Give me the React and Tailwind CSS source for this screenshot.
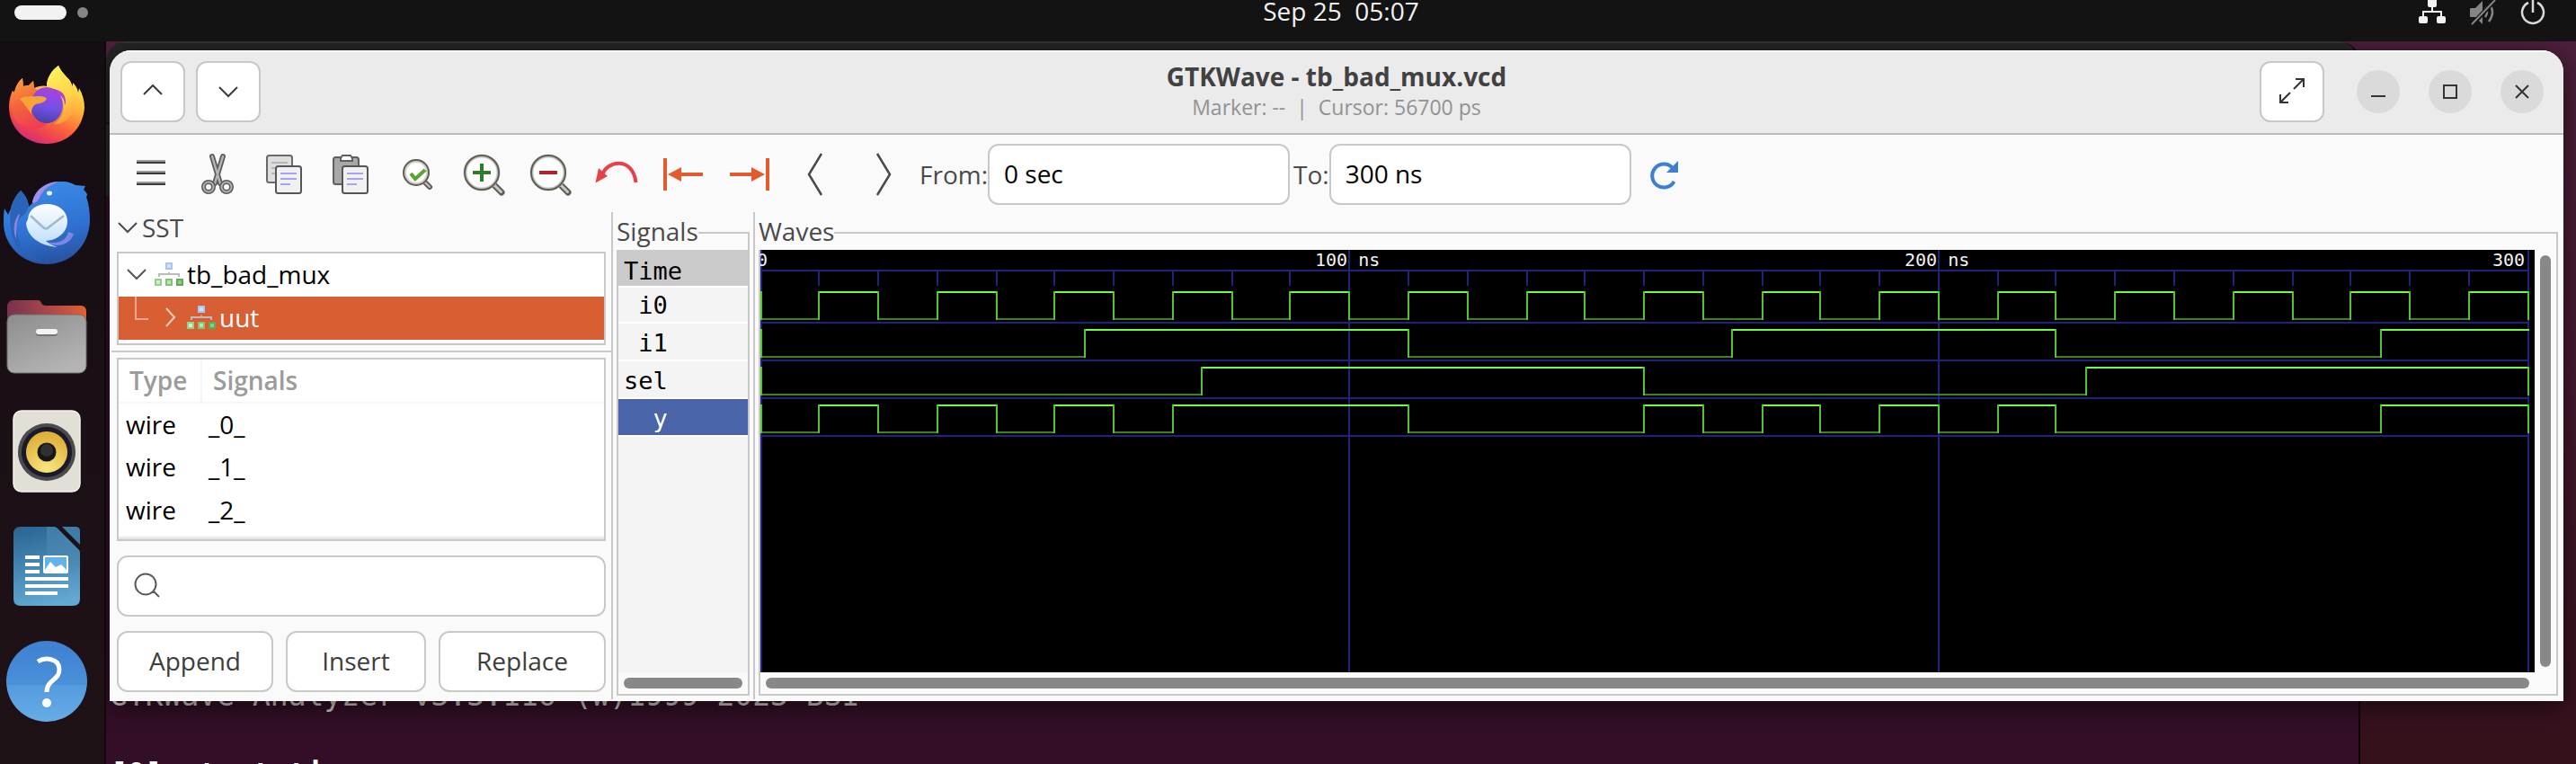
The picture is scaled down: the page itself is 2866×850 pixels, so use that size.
import React from "react";

/* ---------- dock icons ---------- */

function FirefoxIcon() {
  return (
    <svg viewBox="0 0 96 96" className="size-24" aria-hidden="true">
      <defs>
        <linearGradient id="ff-body" x1="0.75" y1="0.1" x2="0.3" y2="1">
          <stop offset="0" stopColor="#fff058" />
          <stop offset="0.35" stopColor="#ffb338" />
          <stop offset="0.62" stopColor="#fa6a3c" />
          <stop offset="0.82" stopColor="#ef4250" />
          <stop offset="1" stopColor="#cf2b7d" />
        </linearGradient>
        <linearGradient id="ff-left" x1="0.2" y1="0" x2="0.5" y2="1">
          <stop offset="0" stopColor="#f7a035" />
          <stop offset="0.5" stopColor="#f4643c" />
          <stop offset="1" stopColor="#ee3f52" />
        </linearGradient>
        <linearGradient id="ff-globe" x1="0.6" y1="0" x2="0.4" y2="1">
          <stop offset="0" stopColor="#ac3fe0" />
          <stop offset="0.55" stopColor="#7450e6" />
          <stop offset="1" stopColor="#4a3fa8" />
        </linearGradient>
        <linearGradient id="ff-flame" x1="0.3" y1="0" x2="0.6" y2="1">
          <stop offset="0" stopColor="#fff45c" />
          <stop offset="0.6" stopColor="#ffd24a" />
          <stop offset="1" stopColor="#ff9a3a" />
        </linearGradient>
      </defs>
      <path d="M61 3C64 10 70 15 74 20C75 23 76 25 77 27L77 22C80 25 82 28 83 33L84 28C88 35 90 42 90 50C88 74 70 90 48 90C24 90 6 72 6 49C6 43 7 37 10 31L12 33C13 27 16 21 21 17L22 26C24 25 26 25 28 25L33 20L34 28C38 26 43 25 48 26C48 16 54 8 61 3Z" fill="url(#ff-body)" />
      <path d="M10 31L12 33C13 27 16 21 21 17L22 26L28 25L33 20L34 28C38 30 41 33 45 38C38 42 32 44 30 50C32 60 40 66 50 65C44 76 24 78 12 62C7 52 6 41 10 31Z" fill="url(#ff-left)" />
      <path d="M61 3C64 10 70 15 74 20C80 30 82 44 77 55C72 65 64 68 56 68C66 62 69 52 66 43C63 36 58 31 48 26C48 16 54 8 61 3Z" fill="url(#ff-flame)" />
      <ellipse cx="48" cy="47" rx="18" ry="20" fill="url(#ff-globe)" />
      <path d="M18 40C24 36 30 38 38 37C42 37 46 37 48 40C46 44 40 45 36 46C32 48 31 52 31 57C26 50 22 44 18 40Z" fill="#f5a437" />
      <path d="M56 35C62 34 68 38 68 47C70 44 69 38 66 34C63 31 59 29 54 29C58 31 61 32 62 35Z" fill="#b33fd6" />
    </svg>
  );
}

function ThunderbirdIcon() {
  return (
    <svg viewBox="0 0 96 96" className="size-24" aria-hidden="true">
      <defs>
        <linearGradient id="tb-body" x1="0.4" y1="0" x2="0.6" y2="1">
          <stop offset="0" stopColor="#3a8ce6" />
          <stop offset="0.6" stopColor="#2f70d0" />
          <stop offset="1" stopColor="#27529f" />
        </linearGradient>
        <linearGradient id="tb-mail" x1="0" y1="0" x2="0" y2="1">
          <stop offset="0" stopColor="#ffffff" />
          <stop offset="1" stopColor="#b9dcfa" />
        </linearGradient>
      </defs>
      <path d="M1 34L5 41L8 34C10 26 14 19 19 14C24 19 27 24 28 32L32 28C33 15 46 3 66 4C72 4 76 6 80 8L91 9L89 13C93 17 94 19 92 21C95 29 96 38 96 48C95 76 74 96 48 96C20 96 0 74 0 50C0 44 0 39 1 34Z" fill="url(#tb-body)" />
      <path d="M32 28C34 15 46 4 62 4C50 8 43 14 40 22C38 26 35 28 32 28Z" fill="#a98be8" />
      <path d="M8 34C10 26 14 19 19 14C24 19 27 24 28 32L24 40C16 44 12 54 16 66C18 78 28 88 40 92C18 88 4 70 8 34Z" fill="#2a63b8" />
      <path d="M17 40C11 48 10 58 14 68C14 56 15 48 18 41Z" fill="#8a84e0" />
      <path d="M72 60C70 70 60 74 46 71C56 78 74 76 78 62Z" fill="#7c86e4" />
      <path d="M27 46C28 34 38 29 48 29C60 29 71 36 71 48C71 61 60 69 47 70C51 74 55 75 60 77C42 76 26 66 25 50Z" fill="url(#tb-mail)" />
      <path d="M30 42L44 55C46 57 48 57 50 55L67 42" fill="none" stroke="#9fb9cf" strokeWidth="2.5" />
      <ellipse cx="51" cy="17" rx="3" ry="2.4" fill="#e8f4ff" />
    </svg>
  );
}

function FilesIcon() {
  return (
    <svg viewBox="0 0 96 96" className="size-24" aria-hidden="true">
      <defs>
        <linearGradient id="fl-back" x1="0" y1="0" x2="1" y2="0">
          <stop offset="0" stopColor="#77324f" />
          <stop offset="0.5" stopColor="#a8464a" />
          <stop offset="1" stopColor="#e2602f" />
        </linearGradient>
        <linearGradient id="fl-front" x1="0" y1="0" x2="0.6" y2="1">
          <stop offset="0" stopColor="#8c8c8c" />
          <stop offset="1" stopColor="#b4b4b4" />
        </linearGradient>
      </defs>
      <path d="M4 16Q4 8 11 8H38Q41 8 42 11Q43 14 47 14H86Q92 14 92 21V40H4Z" fill="url(#fl-back)" />
      <rect x="4" y="24" width="88" height="65" rx="8" fill="url(#fl-front)" stroke="#6f6f6f" strokeWidth="1" />
      <rect x="36" y="42" width="24" height="6" rx="3" fill="#747474" />
      <rect x="36" y="40" width="24" height="6" rx="3" fill="#f3f3f3" />
    </svg>
  );
}

function RhythmboxIcon() {
  return (
    <svg viewBox="0 0 96 96" className="size-24" aria-hidden="true">
      <defs>
        <radialGradient id="rb-cone" cx="0.5" cy="0.9" r="0.8">
          <stop offset="0" stopColor="#f9e680" />
          <stop offset="1" stopColor="#e0b13a" />
        </radialGradient>
      </defs>
      <rect x="11" y="3" width="74" height="90" rx="9" fill="#e2dfd7" stroke="#f6f4ee" strokeWidth="1.5" />
      <circle cx="48" cy="49" r="32" fill="#4b4a4d" />
      <circle cx="48" cy="49" r="28" fill="#1b1a2a" />
      <circle cx="48" cy="49" r="23" fill="url(#rb-cone)" />
      <circle cx="48" cy="49" r="10.5" fill="#161616" />
      <circle cx="48" cy="47" r="7" fill="#303030" />
    </svg>
  );
}

function WriterIcon() {
  return (
    <svg viewBox="0 0 96 96" className="size-24" aria-hidden="true">
      <defs>
        <linearGradient id="wr-body" x1="0.3" y1="0" x2="0.5" y2="1">
          <stop offset="0" stopColor="#2c6796" />
          <stop offset="1" stopColor="#62a9d3" />
        </linearGradient>
      </defs>
      <path d="M19 4H56C58 4 59 5 60 6L83 29C84 30 85 31 85 34V84Q85 92 77 92H19Q11 92 11 84V12Q11 4 19 4Z" fill="url(#wr-body)" />
      <path d="M48 4H56C58 4 59 5 60 6L83 29C84 30 85 31 85 34V48H48Z" fill="#4c89b0" opacity="0.6" />
      <path d="M65 4H80Q85 4 85 9V24Z" fill="#3f7da6" />
      <g fill="#ffffff">
        <rect x="24" y="36" width="16" height="4" />
        <rect x="24" y="44" width="16" height="4" />
        <rect x="24" y="52" width="16" height="4" />
        <rect x="24" y="60" width="48" height="4" />
        <rect x="24" y="68" width="48" height="4" />
        <rect x="24" y="76" width="36" height="4" />
        <rect x="44" y="36" width="28" height="20" rx="2" />
      </g>
      <rect x="46" y="38" width="24" height="14" fill="#63b3ea" />
      <path d="M46 52L52 43L58 49L64 46L70 52V54H46Z" fill="#ffffff" />
    </svg>
  );
}

function HelpIcon() {
  return (
    <svg viewBox="0 0 96 96" className="size-24" aria-hidden="true">
      <defs>
        <linearGradient id="hp-body" x1="0" y1="0" x2="0" y2="1">
          <stop offset="0" stopColor="#3f80d2" />
          <stop offset="0.54" stopColor="#4a90d9" />
          <stop offset="0.55" stopColor="#559bde" />
          <stop offset="1" stopColor="#66ade6" />
        </linearGradient>
      </defs>
      <circle cx="48" cy="48" r="45" fill="url(#hp-body)" />
      <path d="M38 26C46 21 62 22 62 35C62 47 48 46 48 60" fill="none" stroke="#ffffff" strokeWidth="5" />
      <circle cx="48" cy="72" r="5" fill="#ffffff" />
    </svg>
  );
}

const DOCK = [
  ["Firefox", FirefoxIcon],
  ["Thunderbird", ThunderbirdIcon],
  ["Files", FilesIcon],
  ["Rhythmbox", RhythmboxIcon],
  ["LibreOffice Writer", WriterIcon],
  ["Help", HelpIcon],
];

/* ---------- toolbar icons (48 unit grid) ---------- */

function Glyph({ children }) {
  return (
    <svg viewBox="0 0 48 48" className="size-12" fill="none" aria-hidden="true">
      {children}
    </svg>
  );
}

function Page({ back }) {
  return (
    <>
      {back}
      <rect x="15" y="15" width="28" height="30" rx="2.5" fill="#f1f1f1" stroke="#555753" strokeWidth="2" />
      <path d="M20 23H38M20 29H38M20 35H31" stroke="#a5a5ee" strokeWidth="2" />
    </>
  );
}

function Lens({ children }) {
  return (
    <>
      <path d="M35 35L44 44" stroke="#5d5e59" strokeWidth="7" strokeLinecap="round" />
      <path d="M35 35L43.500 43.500" stroke="#c9c8bd" strokeWidth="3" strokeLinecap="round" />
      <circle cx="22" cy="22" r="18.500" fill="#ffffff" stroke="#c9c8bd" strokeWidth="4" />
      <circle cx="22" cy="22" r="19" stroke="#5d5e59" strokeWidth="2" />
      {children}
    </>
  );
}

const TOOLS = [
  [
    "Menu",
    <>
      <path d="M8 9H40M8 21H40M8 33H40" stroke="#9a9a9a" strokeWidth="2" />
      <path d="M8 11H40M8 23H40M8 35H40" stroke="#3a3a3a" strokeWidth="2" />
    </>,
  ],
  [
    "Cut",
    <>
      <path d="M18 4L27 34M30 4L21 34" stroke="#5b5b5b" strokeWidth="6" strokeLinecap="round" />
      <path d="M18 4L27 34M30 4L21 34" stroke="#b4b4b4" strokeWidth="2.500" strokeLinecap="round" />
      <circle cx="14" cy="38" r="5.500" stroke="#5b5b5b" strokeWidth="5" />
      <circle cx="34" cy="38" r="5.500" stroke="#5b5b5b" strokeWidth="5" />
      <circle cx="14" cy="38" r="5.500" stroke="#b0b0b0" strokeWidth="2" />
      <circle cx="34" cy="38" r="5.500" stroke="#b0b0b0" strokeWidth="2" />
    </>,
  ],
  [
    "Copy",
    <Page
      back={
        <>
          <rect x="5" y="3" width="28" height="30" rx="2.500" fill="#dedede" stroke="#6a6b68" strokeWidth="2" />
          <path d="M10 11H28M10 17H20M10 23H14" stroke="#b5b5b5" strokeWidth="2" />
        </>
      }
    />,
  ],
  [
    "Paste",
    <Page
      back={
        <>
          <rect x="5" y="5" width="28" height="30" rx="2.500" fill="#a8a8a8" stroke="#5f605d" strokeWidth="2" />
          <path d="M13 9V6L15 3H24L26 6V9Z" fill="#ffffff" stroke="#5f605d" strokeWidth="2" />
        </>
      }
    />,
  ],
  [
    "Zoom fit",
    <>
      <path d="M33 33L38 38" stroke="#5d5e59" strokeWidth="6" strokeLinecap="round" />
      <path d="M33 33L38 38" stroke="#c9c8bd" strokeWidth="2" strokeLinecap="round" />
      <circle cx="23" cy="22" r="13" fill="#ffffff" stroke="#d3d2c8" strokeWidth="4" />
      <circle cx="23" cy="22" r="14" stroke="#5d5e59" strokeWidth="2" />
      <path d="M17 23L22 29L33 19" stroke="#58a62f" strokeWidth="4" />
    </>,
  ],
  ["Zoom in", <Lens><path d="M12 22H32M22 12V32" stroke="#2f7d2b" strokeWidth="4" /></Lens>],
  ["Zoom out", <Lens><path d="M12 22H32" stroke="#b5222b" strokeWidth="4" /></Lens>],
  [
    "Undo zoom",
    <>
      <path d="M8 25C13 8 42 4 45.500 33" stroke="#e4414b" strokeWidth="4" />
      <path d="M4 17L14 26L0.500 33.500Z" fill="#e4414b" />
    </>,
  ],
  [
    "Zoom to start",
    <g fill="#e25b2e">
      <rect x="2" y="6" width="4" height="36" />
      <rect x="20" y="22" width="26" height="4" />
      <path d="M7 24L22 16V32Z" />
    </g>,
  ],
  [
    "Zoom to end",
    <g fill="#e25b2e">
      <rect x="42" y="6" width="4" height="36" />
      <rect x="2" y="22" width="26" height="4" />
      <path d="M41 24L26 16V32Z" />
    </g>,
  ],
  ["Find previous edge", <path d="M30 1L16 24L30 47" stroke="#4a4a4a" strokeWidth="2.500" />],
  ["Find next edge", <path d="M18 1L32 24L18 47" stroke="#4a4a4a" strokeWidth="2.500" />],
];

function ToolButton({ label, children }) {
  return (
    <button type="button" aria-label={label} className="flex h-[68px] w-[74px] items-center justify-center">
      <Glyph>{children}</Glyph>
    </button>
  );
}

function TimeEntry({ id, label, value }) {
  return (
    <>
      <label htmlFor={id} className="pl-1 text-[#4a4a4a]">{label}</label>
      <input
        id={id}
        type="text"
        defaultValue={value}
        className="h-[68px] w-[336px] rounded-xl border-2 border-[#c8c8c8] bg-white px-4 pb-0.5 text-black"
      />
    </>
  );
}

function BoxButton({ label, className, children }) {
  return (
    <button
      type="button"
      aria-label={label}
      className={"flex h-[68px] items-center justify-center rounded-xl border-2 border-[#c8c8c8] bg-white pb-0.5 text-[#3d3d3d] " + className}
    >
      {children}
    </button>
  );
}

function RoundButton({ label, children }) {
  return (
    <button type="button" aria-label={label} className="flex size-12 items-center justify-center rounded-full bg-[#dadada]">
      <svg viewBox="0 0 16 16" className="size-4" fill="none" stroke="#333333" strokeWidth="2" aria-hidden="true">
        {children}
      </svg>
    </button>
  );
}

/* ---------- left pane ---------- */

function Expander({ open }) {
  return (
    <svg viewBox="0 0 24 24" className="size-6 shrink-0" fill="none" stroke="currentColor" strokeWidth="2" aria-hidden="true">
      <path d={open ? "M2 7L12 17L22 7" : "M5 2L14 12L5 22"} />
    </svg>
  );
}

function ModuleIcon() {
  return (
    <svg viewBox="0 0 32 28" className="h-7 w-8 shrink-0" aria-hidden="true">
      <rect x="12" y="1" width="8" height="8" fill="#a9c4ee" />
      <rect x="14" y="3" width="4" height="4" fill="#d3e2fa" />
      <path d="M5 17V14H27V17M16 14V12" fill="none" stroke="#bcbcbc" strokeWidth="2" />
      <rect x="0" y="19" width="8" height="8" fill="#97cf87" />
      <rect x="2" y="21" width="4" height="4" fill="#d4efcb" />
      <rect x="12" y="19" width="8" height="8" fill="#84c274" />
      <rect x="14" y="21" width="4" height="4" fill="#bfe3b4" />
      <rect x="24" y="19" width="8" height="8" fill="#63a857" />
      <rect x="26" y="21" width="4" height="4" fill="#92c987" />
    </svg>
  );
}

function LeftPane() {
  return (
    <section className="flex w-[558px] shrink-0 flex-col">
      <div className="flex h-[154px] flex-col pl-2 pr-1.5">
        <button type="button" className="flex h-[34px] items-center gap-1 text-[#4a4a4a]">
          <Expander open />
          SST
        </button>
        <ul className="mt-2.5 h-[104px] border-2 border-[#c8c8c8] bg-white">
          <li className="flex h-12 items-center pb-0.5 pl-2 text-black">
            <span className="text-[#555555]"><Expander open /></span>
            <span className="ml-2 flex items-center gap-1"><ModuleIcon />tb_bad_mux</span>
          </li>
          <li className="flex h-12 items-center bg-[#d85e33] pb-0.5 text-white">
            <svg viewBox="0 0 48 48" className="size-12 shrink-0" fill="none" stroke="#eda98f" strokeWidth="2" aria-hidden="true">
              <path d="M19 1V26H33" />
            </svg>
            <span className="text-[#f4cdbf]"><Expander /></span>
            <span className="ml-1 flex items-center gap-1"><ModuleIcon />uut</span>
          </li>
        </ul>
      </div>
      <div className="ml-0.5 h-0.5 bg-[#c8c8c8]" />
      <div className="flex flex-1 flex-col gap-4 pb-2.5 pl-2 pr-1.5 pt-1.5">
        <div className="flex-1 border-2 border-[#c8c8c8] bg-white shadow-[inset_0_-2px_0_#e4e4e4,inset_0_-4px_0_#f4f4f4]">
          <table className="w-full text-left">
            <thead>
              <tr className="h-12 border-b-2 border-[#f6f6f6] text-[#9b9b9b]">
                <th className="w-[92px] border-r-2 border-[#f6f6f6] pb-0.5 pl-3 font-semibold">Type</th>
                <th className="pb-0.5 pl-3 font-semibold">Signals</th>
              </tr>
            </thead>
            <tbody className="text-black">
              {["_0_", "_1_", "_2_"].map((name) => (
                <tr key={name} className="h-12">
                  <td className="pb-0.5 pl-2">wire</td>
                  <td className="pb-0.5 pl-2">{name}</td>
                </tr>
              ))}
            </tbody>
          </table>
        </div>
        <div className="flex h-[68px] items-center gap-3 rounded-xl border-2 border-[#c8c8c8] bg-white pl-4 pr-3">
          <svg viewBox="0 0 32 32" className="size-8" fill="none" stroke="#5a5a5a" strokeWidth="2" aria-hidden="true">
            <circle cx="14" cy="14" r="11.500" />
            <path d="M21 23H24L29 28" />
          </svg>
          <input type="text" aria-label="Filter signals" className="min-w-0 flex-1 bg-transparent outline-none" />
        </div>
        <div className="flex gap-3.5">
          <BoxButton label="Append" className="w-[174px]">Append</BoxButton>
          <BoxButton label="Insert" className="w-[156px]">Insert</BoxButton>
          <BoxButton label="Replace" className="flex-1">Replace</BoxButton>
        </div>
      </div>
    </section>
  );
}

function PaneHandle() {
  return <div className="mb-0.5 w-0.5 shrink-0 bg-[#c8c8c8]" />;
}

/* ---------- signal names ---------- */

const NAMES = [" i0", " i1", "sel", "  y"];

function SignalsPane() {
  return (
    <section className="flex w-[156px] shrink-0 flex-col px-1 pb-1.5 pt-1">
      <fieldset className="flex min-w-0 flex-1 flex-col border-2 border-[#c8c8c8]">
        <legend className="-ml-0.5 h-[38px] bg-[#fafafa] leading-[34px] text-[#4a4a4a]">Signals</legend>
        <div className="flex h-full flex-col">
          <div className="flex-1 bg-[#f4f4f4] font-['DejaVu_Sans_Mono',monospace] text-[27px] text-black">
            <div className="flex h-10 items-center bg-[#cbcbcb] pl-1.5 pt-2">Time</div>
            <ul>
              {NAMES.map((name) => (
                <li
                  key={name}
                  className={
                    "flex h-[42px] items-center whitespace-pre border-b-2 border-white pl-1.5 pt-1 first:border-t-2 first:pt-0.5 " +
                    (name.trim() === "y" ? "bg-[#4a64a8] text-white" : "")
                  }
                >
                  {name}
                </li>
              ))}
            </ul>
          </div>
          <div className="p-1.5">
            <div className="h-3 rounded-full bg-[#888888]" />
          </div>
        </div>
      </fieldset>
    </section>
  );
}

/* ---------- waveforms ---------- */

const END = 300;
const tens = (from, to) => Array.from({ length: (to - from) / 10 + 1 }, (_, i) => from + i * 10);

// Each trace starts low at 0 ns and toggles at the listed times (ns).
const TRACES = [
  { name: "i0", toggles: tens(10, 290), closed: true },
  { name: "i1", toggles: [55, 110, 165, 220, 275], closed: false },
  { name: "sel", toggles: [75, 150, 225], closed: true },
  { name: "y", toggles: [...tens(10, 70), 110, ...tens(150, 220), 275], closed: true },
];

const xOf = (ns) => Math.floor((ns / 10) * 32.77) * 2 + 1;

function Trace({ toggles, closed, top }) {
  const stops = [0, ...toggles, END];
  const high = top + 1;
  const low = top + 31;
  return (
    <g strokeWidth="2">
      {stops.slice(0, -1).map((t, i) => (
        <path
          key={"h" + t}
          d={`M${xOf(t) - 1} ${i % 2 ? high : low}H${xOf(stops[i + 1]) + 1}`}
          stroke={i % 2 ? "#6ffb45" : "#3a8420"}
        />
      ))}
      {(closed ? stops : stops.slice(0, -1)).map((t) => (
        <path key={"v" + t} d={`M${xOf(t)} ${top}V${top + 32}`} stroke="#53c534" />
      ))}
    </g>
  );
}

function WaveCanvas() {
  return (
    <svg
      viewBox="0 0 1974 470"
      preserveAspectRatio="xMinYMin slice"
      className="block h-full w-full bg-black"
      role="img"
      aria-label="Waveforms of i0, i1, sel and y from 0 to 300 ns"
    >
      <g stroke="#22227a" strokeWidth="2">
        {[0, 100, 200, 300].map((t) => (
          <path key={t} d={`M${xOf(t)} 0V470`} />
        ))}
        {tens(10, 290).map((t) => (
          <path key={t} d={`M${xOf(t)} 24V40`} />
        ))}
        {[23, 81, 123, 165, 207].map((y) => (
          <path key={y} d={`M0 ${y}H1968`} />
        ))}
      </g>
      <g fill="#f2f2f2" className="font-['DejaVu_Sans_Mono',monospace] text-[20px]" xmlSpace="preserve">
        <text x="-4" y="18">0</text>
        <text x={xOf(100) - 38} y="18">100 ns</text>
        <text x={xOf(200) - 38} y="18">200 ns</text>
        <text x={xOf(300) - 40} y="18">300</text>
      </g>
      {TRACES.map((trace, i) => (
        <Trace key={trace.name} toggles={trace.toggles} closed={trace.closed} top={46 + i * 42} />
      ))}
    </svg>
  );
}

function WavesPane() {
  return (
    <section className="flex min-w-0 flex-1 flex-col pb-1.5 pl-1 pr-1.5 pt-1">
      <fieldset className="min-w-0 flex-1 border-2 border-[#c8c8c8]">
        <legend className="-ml-0.5 h-[38px] bg-[#fafafa] leading-[34px] text-[#4a4a4a]">Waves</legend>
        <div className="grid h-full grid-cols-[minmax(0,1fr)_24px] grid-rows-[minmax(0,1fr)_24px]">
          <WaveCanvas />
          <div className="flex justify-center py-1.5">
            <div className="w-3 rounded-full bg-[#888888]" />
          </div>
          <div className="p-1.5">
            <div className="h-3 rounded-full bg-[#888888]" />
          </div>
        </div>
      </fieldset>
    </section>
  );
}

/* ---------- windows ---------- */

function GtkWaveWindow() {
  return (
    <div className="absolute bottom-[70px] left-1 right-3.5 top-2.5 flex flex-col overflow-hidden rounded-t-[24px] bg-[#fafafa] shadow-[0_6px_28px_rgba(0,0,0,0.6)]">
      <header className="grid h-[94px] shrink-0 grid-cols-[1fr_auto_1fr] items-center border-b-2 border-t-2 border-b-[#bdbdbd] border-t-white bg-[#ebebeb] pb-0.5">
        <div className="flex gap-3 pl-3">
          <BoxButton label="Previous" className="w-[72px]">
            <svg viewBox="0 0 24 24" className="size-6" fill="none" stroke="currentColor" strokeWidth="2" aria-hidden="true">
              <path d="M2 16L12 6L22 16" />
            </svg>
          </BoxButton>
          <BoxButton label="Next" className="w-[72px]">
            <svg viewBox="0 0 24 24" className="size-6" fill="none" stroke="currentColor" strokeWidth="2" aria-hidden="true">
              <path d="M2 8L12 18L22 8" />
            </svg>
          </BoxButton>
        </div>
        <div className="text-center leading-[34px]">
          <h1 className="font-bold text-[#414141]">GTKWave - tb_bad_mux.vcd</h1>
          <p className="whitespace-pre text-[23px] text-[#929292]">Marker: --  |  Cursor: 56700 ps</p>
        </div>
        <div className="flex items-center justify-end gap-8 pr-[22px]">
          <BoxButton label="Full screen" className="mr-1 w-[72px]">
            <svg viewBox="0 0 32 32" className="size-8" fill="none" stroke="#333333" strokeWidth="2" aria-hidden="true">
              <path d="M18 14L29 3M20 3H29V12M14 18L3 29M3 20V29H12" />
            </svg>
          </BoxButton>
          <RoundButton label="Minimize"><path d="M0 13H16" /></RoundButton>
          <RoundButton label="Maximize"><path d="M1 1H15V15H1Z" /></RoundButton>
          <RoundButton label="Close"><path d="M1 1L15 15M15 1L1 15" /></RoundButton>
        </div>
      </header>
      <div className="flex shrink-0 items-center pb-2 pl-[9px] pt-2.5">
        {TOOLS.map(([label, drawing]) => (
          <ToolButton key={label} label={label}>{drawing}</ToolButton>
        ))}
        <TimeEntry id="from-time" label="From:" value="0 sec" />
        <TimeEntry id="to-time" label="To:" value="300 ns" />
        <ToolButton label="Reload">
          <path d="M34.500 32A13 13 0 1 1 33 17" stroke="#3c7fd3" strokeWidth="4" />
          <path d="M39 9V22H26Z" fill="#3c7fd3" />
        </ToolButton>
      </div>
      <div className="flex min-h-0 flex-1">
        <LeftPane />
        <PaneHandle />
        <SignalsPane />
        <PaneHandle />
        <WavesPane />
      </div>
    </div>
  );
}

function TerminalWindow() {
  return (
    <div className="absolute inset-y-0 left-0 right-60 flex flex-col overflow-hidden rounded-t-[24px] border-r-2 border-[#0c0409] bg-[#330f27]">
      <div className="h-[92px] shrink-0 border-b-2 border-t-2 border-b-[#151515] border-t-[#363636] bg-[#262626]" />
      <div className="h-20 shrink-0 bg-[#2a2a2a]" />
      <pre className="mt-[534px] pl-1 font-['DejaVu_Sans_Mono',monospace] text-[33px] leading-[44px] text-[#d0cfcc]">
        {"GTKWave Analyzer v3.3.116 (w)1999-2023 BSI\n\n"}
        <b className="text-white">[0] start time.</b>
      </pre>
    </div>
  );
}

export default function App() {
  return (
    <div className="flex h-screen flex-col overflow-hidden bg-[#131313] font-['Open_Sans','Noto_Sans',sans-serif] text-[28px]">
      <div className="grid h-[46px] shrink-0 grid-cols-[118px_1fr_auto_1fr] items-start text-white">
        <div className="flex items-center gap-3 pl-4 pt-1.5">
          <span className="h-4 w-[58px] rounded-full bg-[#f2f2f2]" />
          <span className="size-3 rounded-full bg-[#858585]" />
        </div>
        <time className="col-start-3 h-6 whitespace-pre leading-6 text-[#f2f2f2]">Sep 25  05:07</time>
        <div className="flex h-7 items-start justify-end gap-6 pr-8">
          <svg viewBox="0 4 32 28" className="h-7 w-8" fill="#f2f2f2" aria-label="Network">
            <rect x="11" y="2" width="10" height="10" rx="2" />
            <path d="M6 22V17H26V22M16 10V17" fill="none" stroke="#f2f2f2" strokeWidth="2" />
            <rect x="1" y="22" width="10" height="8" rx="2" />
            <rect x="21" y="22" width="10" height="8" rx="2" />
          </svg>
          <svg viewBox="0 4 32 28" className="h-7 w-8" fill="#858585" aria-label="Muted">
            <path d="M2 14Q2 13 3 13H8L16 5V31L8 23H3Q2 23 2 22Z" />
            <path d="M19 12Q23 17 19 23M23 8Q31 17 23 28" fill="none" stroke="#858585" strokeWidth="2.500" />
            <path d="M4 32L30 4" stroke="#131313" strokeWidth="5" />
            <path d="M4 31L30 4" stroke="#858585" strokeWidth="2" />
          </svg>
          <svg viewBox="0 4 32 28" className="h-7 w-8" fill="none" stroke="#d9d9d9" strokeWidth="2.500" aria-label="Power">
            <path d="M11 7A12 12 0 1 0 21 7M16 2V18" />
          </svg>
        </div>
      </div>
      <div className="flex min-h-0 flex-1">
        <nav className="flex w-[118px] shrink-0 flex-col gap-8 overflow-hidden border-r-2 border-[#0f090c] bg-linear-to-b from-[#150d14] to-[#1f1217] pl-1 pt-6">
          {DOCK.map(([label, Icon]) => (
            <button key={label} type="button" aria-label={label} className="size-24 shrink-0">
              <Icon />
            </button>
          ))}
        </nav>
        <main className="relative flex-1 overflow-hidden bg-linear-to-b from-[#4d203b] via-[#46192f] to-[#34111b]">
          <TerminalWindow />
          <GtkWaveWindow />
        </main>
      </div>
    </div>
  );
}
